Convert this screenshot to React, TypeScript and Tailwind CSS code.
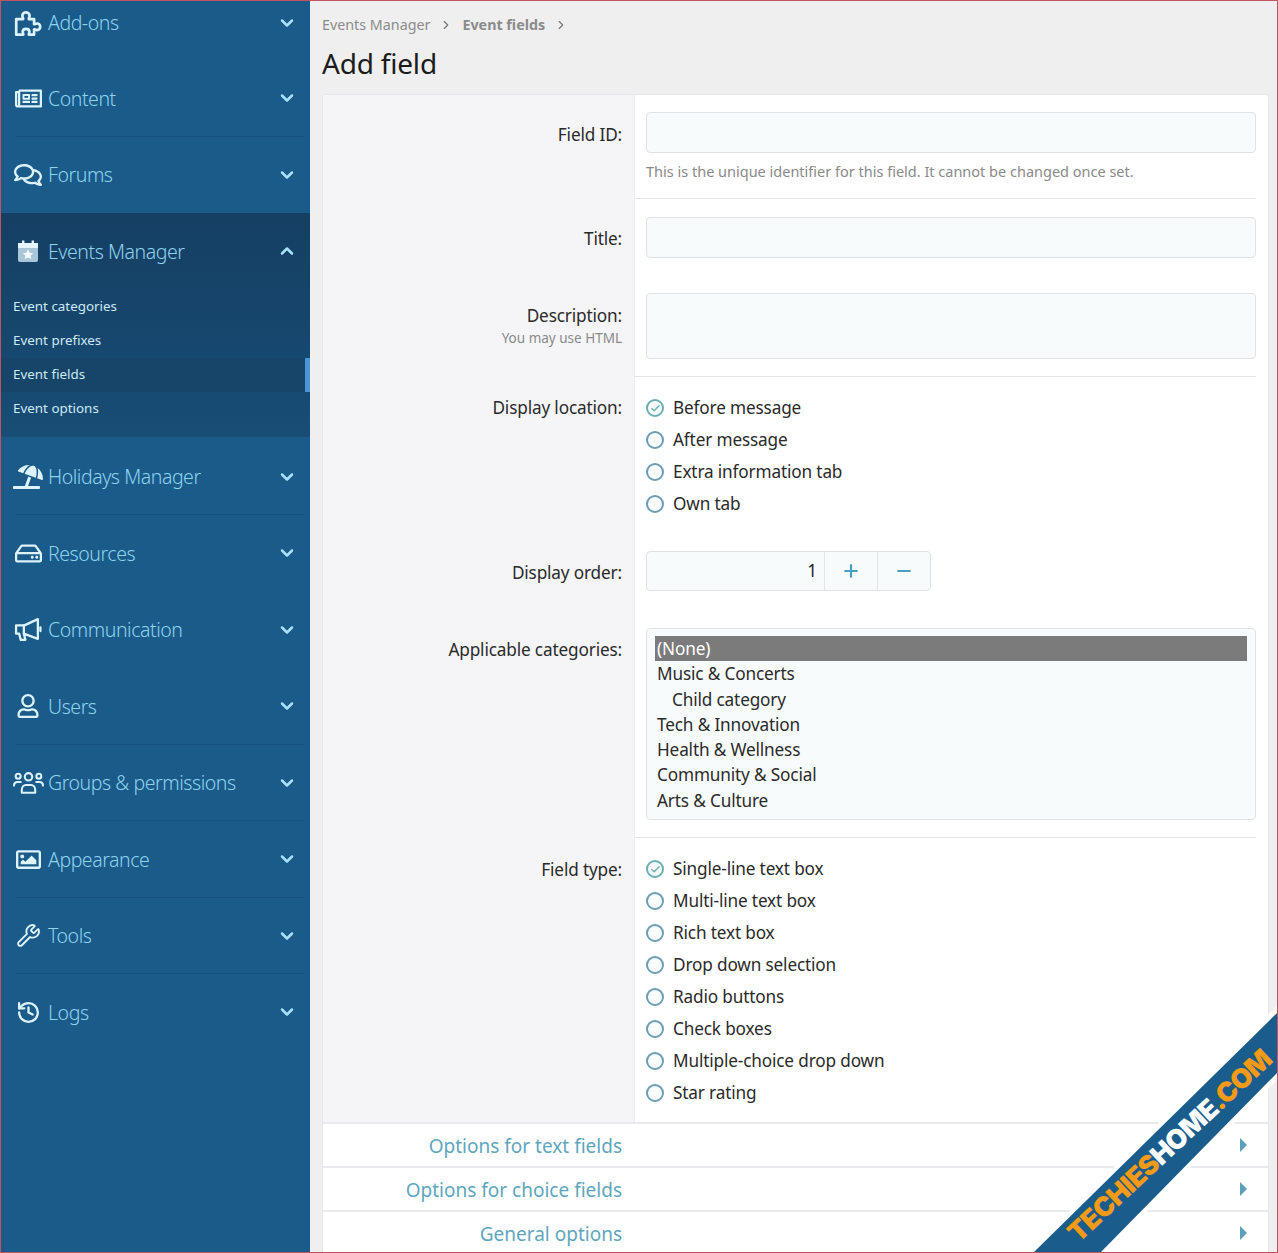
import React from "react";
import { ChevronDown, ChevronUp, Plus, Minus, Wrench, History, ChevronRight, Check } from "lucide-react";
import { FaRegNewspaper, FaRegComments, FaUmbrellaBeach, FaRegHdd, FaRegUser, FaRegImage } from "react-icons/fa";

const FONT = "font-['Noto_Sans','Open_Sans',sans-serif]";

function CalIcon() {
  return (
    <svg viewBox="0 0 24 24" className="h-[24px] w-[24px]">
      <rect x="2" y="4" width="20" height="19" rx="2" fill="#a9c6d8" />
      <rect x="2" y="4" width="20" height="5" fill="#e6f5fb" />
      <rect x="6" y="1.5" width="2.4" height="5" fill="#e6f5fb" />
      <rect x="15.6" y="1.5" width="2.4" height="5" fill="#e6f5fb" />
      <path d="M12 10.5l1.7 3.2 3.5.5-2.6 2.4.7 3.5-3.3-1.7-3.3 1.7.7-3.5-2.6-2.4 3.5-.5z" fill="#f4fbff" />
    </svg>
  );
}

function PuzzleIcon() {
  return (
    <svg viewBox="0 0 26 24" className="h-[27px] w-[29px]" fill="none" stroke="#dcf3fb" strokeWidth="2.4" strokeLinejoin="round">
      <path d="M2 8h6.2c.3-.6-.7-1.4-.7-3C7.5 3.3 9 2 10.7 2s3.3 1.3 3.3 3c0 1.6-1 2.4-.7 3H18v4.6c.6.3 1.3-.6 2.8-.6 1.5 0 2.7 1.3 2.7 2.9s-1.2 3-2.700 3c-1.500 0-2.200-.9-2.800-.6V22h-4.700c-.3-.6.5-1.200.5-2.600 0-1.500-1.300-2.600-3-2.600s-3 1.100-3 2.600c0 1.400.8 2 .5 2.600H2z" />
    </svg>
  );
}

function BullhornIcon() {
  return (
    <svg viewBox="0 0 27 24" className="h-[25px] w-[28px]" fill="none" stroke="#dcf3fb" strokeWidth="2.2" strokeLinejoin="round" strokeLinecap="round">
      <path d="M23 2 10 8H2v8h3l1.500 6h4.500l-1.500-6L23 21z" />
      <path d="M9.500 8v8" />
      <path d="M25.500 10v3.500" />
    </svg>
  );
}

function GroupsIcon() {
  return (
    <svg viewBox="0 0 30 24" className="h-[25px] w-[31px]" fill="none" stroke="#dcf3fb" strokeWidth="2" strokeLinejoin="round" strokeLinecap="round">
      <circle cx="15" cy="6.500" r="3.600" />
      <path d="M8.500 22v-2.500c0-3 1.800-5 4-5h5c2.200 0 4 2 4 5V22z" />
      <circle cx="5" cy="6" r="2.400" />
      <circle cx="25" cy="6" r="2.400" />
      <path d="M1 15c0-2.200 1.500-3.500 3.500-3.500h3" />
      <path d="M29 15c0-2.200-1.500-3.500-3.500-3.500h-3" />
    </svg>
  );
}

const ic = "text-[#dcf3fb]";
const navTop = [
  { label: "Content", icon: <FaRegNewspaper className={ic} size={27} />, line: true },
  { label: "Forums", icon: <FaRegComments className={ic} size={28} />, line: false },
];
const navBottom = [
  { label: "Holidays Manager", icon: <FaUmbrellaBeach className={ic} size={30} />, line: true },
  { label: "Resources", icon: <FaRegHdd className={ic} size={27} />, line: false },
  { label: "Communication", icon: <BullhornIcon />, line: false },
  { label: "Users", icon: <FaRegUser className={ic} size={24} />, line: true },
  { label: "Groups & permissions", icon: <GroupsIcon />, line: true },
  { label: "Appearance", icon: <FaRegImage className={ic} size={25} />, line: true },
  { label: "Tools", icon: <Wrench className={ic} size={25} strokeWidth={1.8} />, line: true },
  { label: "Logs", icon: <History className={ic} size={25} strokeWidth={2.2} />, line: false },
];

function NavRow({ label, icon, line, open }: { label: string; icon: React.ReactNode; line?: boolean; open?: boolean }) {
  return (
    <div className={`flex h-[76.5px] items-center pl-[11px] pr-[13px] ${line ? "relative" : ""}`}>
      <span className="flex w-[32px] justify-center mr-[4px]">{icon}</span>
      <span className="flex-1 text-[19.5px] font-light tracking-[-0.45px] text-[#8fd3ef]">{label}</span>
      {open ? <ChevronUp size={20} strokeWidth={3} className="text-[#a8e2f8]" /> : <ChevronDown size={20} strokeWidth={3} className="text-[#a8e2f8]" />}
      {line && <span className="absolute bottom-0 left-[14px] right-[6px] h-px bg-[#17527e]" />}
    </div>
  );
}

function Radio({ label, checked }: { label: string; checked?: boolean }) {
  return (
    <div className="flex h-[32px] items-center">
      <span className={`mr-[9px] flex h-[18px] w-[18px] items-center justify-center rounded-full border-2 bg-[#fbfdfd] ${checked ? "border-[#6aaeb4]" : "border-[#6b9db5]"}`}>
        {checked && <Check size={11} strokeWidth={3} className="text-[#6aaeb4]" />}
      </span>
      <span className="text-[17.2px] leading-[24px] tracking-[-0.15px] text-[#2a2a2a]">{label}</span>
    </div>
  );
}

function Label({ children, pad, sub }: { children: React.ReactNode; pad: string; sub?: string }) {
  return (
    <div className={`bg-[#f5f5f7] pr-[12px] text-right ${pad}`}>
      <div className="text-[17.2px] leading-[24px] tracking-[-0.15px] text-[#2a2a2a]">{children}</div>
      {sub && <div className="text-[13.5px] leading-[20px] text-[#8a8a8a]">{sub}</div>}
    </div>
  );
}

const inputCls = "rounded-[4px] border border-[#dfe3e7] bg-[#f8fbfc]";

function Row({ label, pad, sub, children, inner }: { label: string; pad: string; sub?: string; children: React.ReactNode; inner: string }) {
  return (
    <div className="grid grid-cols-[311px_1fr]">
      <Label pad={pad} sub={sub}>{label}</Label>
      <div className="border-l border-[#eceef0] pr-[12px]">
        <div className={inner}>{children}</div>
      </div>
    </div>
  );
}

const cats = ["Music & Concerts", "Child category", "Tech & Innovation", "Health & Wellness", "Community & Social", "Arts & Culture"];
const fieldTypes = ["Single-line text box", "Multi-line text box", "Rich text box", "Drop down selection", "Radio buttons", "Check boxes", "Multiple-choice drop down", "Star rating"];

function Collapse({ label }: { label: string }) {
  return (
    <div className="grid h-[44px] grid-cols-[299px_1fr] items-center border-t-2 border-[#e9e9ee] pr-[21px]">
      <div className="pt-[3px] text-right text-[19px] text-[#5ea6bd]">{label}</div>
      <div className="flex justify-end">
        <span className="h-0 w-0 border-y-[7px] border-l-[7px] border-y-transparent border-l-[#5a9fbd]" />
      </div>
    </div>
  );
}

export default function App() {
  return (
    <div className={`relative flex h-[1253px] w-[1278px] overflow-hidden border border-[#c0555f] bg-[#efefef] ${FONT}`}>
      <aside className="w-[309px] shrink-0 overflow-hidden bg-[#1a5b8a]">
        <div className="flex h-[59px] items-start pl-[11px] pr-[13px] pt-[9px]">
          <span className="flex w-[32px] justify-center mr-[4px]"><PuzzleIcon /></span>
          <span className="flex-1 text-[19.5px] leading-[26px] font-light tracking-[-0.45px] text-[#8fd3ef]">Add-ons</span>
          <ChevronDown size={20} strokeWidth={3} className="mt-[3px] text-[#a8e2f8]" />
        </div>
        {navTop.map((n) => <NavRow key={n.label} {...n} />)}
        <div className="bg-gradient-to-b from-[#153f63] to-[#184d76] pb-[11px]">
          <NavRow label="Events Manager" icon={<CalIcon />} open />
          {["Event categories", "Event prefixes", "Event fields", "Event options"].map((s) => (
            <div key={s} className={`flex h-[34px] items-center justify-between pl-[12px] text-[13.4px] text-[#cdeaf5] ${s === "Event fields" ? "bg-[#164569]" : ""}`}>
              <span>{s}</span>
              {s === "Event fields" && <span className="h-full w-[5px] bg-[#4a94d6]" />}
            </div>
          ))}
        </div>
        <div className="pt-[2px]">
          {navBottom.map((n) => <NavRow key={n.label} {...n} />)}
        </div>
      </aside>

      <main className="flex min-w-0 flex-1 flex-col pl-[12px] pr-[8px]">
        <div className="flex h-[47px] shrink-0 items-center text-[14.3px] text-[#8b8b8b]">
          <span>Events Manager</span>
          <ChevronRight size={14} className="mx-[9px] text-[#777]" />
          <span className="font-bold">Event fields</span>
          <ChevronRight size={14} className="mx-[9px] text-[#777]" />
        </div>
        <h1 className="h-[46px] shrink-0 text-[28px] leading-[30px] tracking-[-0.2px] text-[#1c1c1c]">Add field</h1>
        <div className="flex-1 rounded-t-[3px] border-x border-t border-[#e6e6ea] bg-white">
          <Row label="Field ID:" pad="pt-[28px]" inner="border-b border-[#e4e4e8] pt-[17px]">
            <div className="ml-[11px]">
              <div className={`h-[41px] ${inputCls}`} />
              <p className="pt-[8px] pb-[16px] text-[14.5px] leading-[21px] text-[#8a8a8a]">This is the unique identifier for this field. It cannot be changed once set.</p>
            </div>
          </Row>
          <Row label="Title:" pad="pt-[28px]" inner="pt-[18px] pb-[17px] pl-[11px]">
            <div className={`h-[41px] ${inputCls}`} />
          </Row>
          <Row label="Description:" pad="pt-[29px]" sub="You may use HTML" inner="border-b border-[#e4e4e8] pt-[18px]">
            <div className="ml-[11px] pb-[17px]"><div className={`h-[66px] ${inputCls}`} /></div>
          </Row>
          <Row label="Display location:" pad="pt-[19px]" inner="pt-[15px] pb-[15px] pl-[11px]">
            <Radio label="Before message" checked />
            <Radio label="After message" />
            <Radio label="Extra information tab" />
            <Radio label="Own tab" />
          </Row>
          <Row label="Display order:" pad="pt-[26px]" inner="pt-[16px] pb-[18px] pl-[11px]">
            <div className={`flex h-[40px] w-[285px] overflow-hidden ${inputCls}`}>
              <div className="flex flex-1 items-center justify-end pr-[7px] text-[17.2px] text-[#222]">1</div>
              <div className="flex w-[53px] items-center justify-center border-l border-[#e3e6e9]"><Plus size={20} strokeWidth={2.6} className="text-[#4a9ec0]" /></div>
              <div className="flex w-[53px] items-center justify-center border-l border-[#e3e6e9]"><Minus size={20} strokeWidth={2.6} className="text-[#4a9ec0]" /></div>
            </div>
          </Row>
          <Row label="Applicable categories:" pad="pt-[29px]" inner="border-b border-[#e4e4e8] pt-[19px]">
            <div className="ml-[11px] mb-[17px]">
              <div className={`h-[192px] px-[8px] pt-[7px] ${inputCls}`}>
                <div className="h-[25.3px] bg-[#7b7b7b] pl-[2px] text-[17.2px] leading-[25.3px] tracking-[-0.15px] text-white">(None)</div>
                {cats.map((c) => (
                  <div key={c} className={`h-[25.3px] text-[17.2px] leading-[25.3px] tracking-[-0.15px] text-[#2a2a2a] ${c === "Child category" ? "pl-[17px]" : "pl-[2px]"}`}>{c}</div>
                ))}
              </div>
            </div>
          </Row>
          <Row label="Field type:" pad="pt-[20px]" inner="pt-[15px] pb-[13px] pl-[11px]">
            {fieldTypes.map((f, i) => <Radio key={f} label={f} checked={i === 0} />)}
          </Row>
          <Collapse label="Options for text fields" />
          <Collapse label="Options for choice fields" />
          <Collapse label="General options" />
        </div>
      </main>

      <svg viewBox="0 0 1278 1253" className="pointer-events-none absolute -left-px -top-px h-[1253px] w-[1278px]">
        <polygon points="1027,1253 1278,1005 1278,1079 1106,1253" fill="#ffffff" />
        <polygon points="1033,1253 1278,1012 1278,1072 1100,1253" fill="#1a5d8c" />
      </svg>
      <div className="pointer-events-none absolute left-[1029px] top-[1130px] w-[280px] -rotate-[43deg] whitespace-nowrap text-center font-['Inter',sans-serif] text-[27px] leading-[30px] font-black tracking-[-0.7px] text-[#f59a16]">
        TECHIES<span className="text-white">HOME</span>.COM
      </div>
    </div>
  );
}
